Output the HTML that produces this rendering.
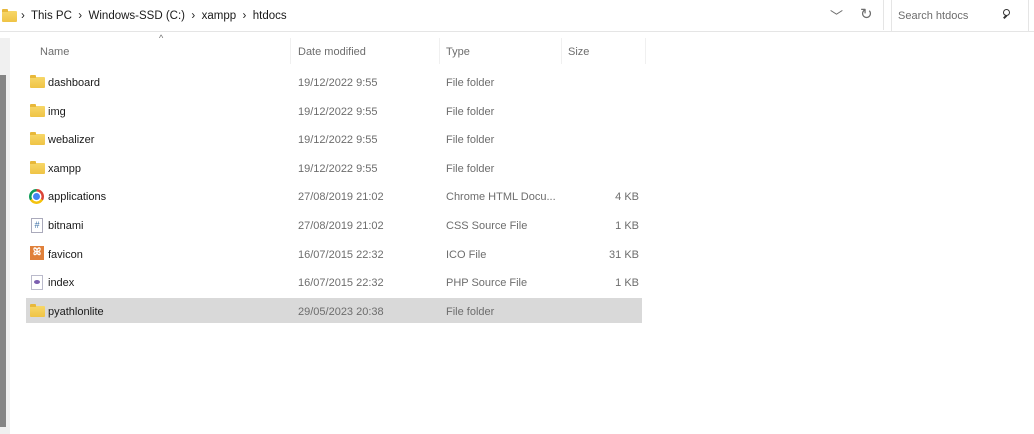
<!DOCTYPE html>
<html><head><style>
body{margin:0;width:1034px;height:434px;background:#fff;font-family:"Liberation Sans",sans-serif;font-size:11px;color:#1a1a1a;position:relative;overflow:hidden}
.a{position:absolute;white-space:nowrap}
.sep{position:absolute;top:38px;height:26px;width:1px;background:#f0f0f0}
.g{color:#6d6d6d}
.r{text-align:right;width:60px}
.fold{position:absolute;width:15px;height:11px;background:linear-gradient(#f7d768,#efc345);border-radius:1px}
.fold:before{content:"";position:absolute;left:0;top:-2px;width:6px;height:3px;background:#e8b83a;border-radius:1px 1px 0 0}
</style></head><body>
<div class="a" style="left:0;top:0;width:1034px;height:31px;border-bottom:1px solid #e5e5e5"></div>
<div class="fold" style="left:2px;top:11px"></div>
<div class="a" style="left:21px;top:10px;font-size:11.5px">›&nbsp; This PC &nbsp;›&nbsp; Windows-SSD (C:) &nbsp;›&nbsp; xampp &nbsp;›&nbsp; htdocs</div>
<div class="a" style="left:0;top:-1px;width:883px;height:31px;border-right:1px solid #e5e5e5"></div>
<div class="a g" style="left:830px;top:6px;font-size:13px">﹀</div>
<div class="a g" style="left:860px;top:5px;font-size:15px">↻</div>
<div class="a" style="left:891px;top:-1px;width:136px;height:31px;border:1px solid #e5e5e5"></div>
<div class="a g" style="left:898px;top:10px">Search htdocs</div>
<div class="a" style="left:1003px;top:9px;width:5px;height:5px;border:1.5px solid #333;border-radius:50%"></div>
<div class="a" style="left:1003px;top:16px;width:4px;height:1.5px;background:#333;transform:rotate(-45deg)"></div>
<div class="a" style="left:0;top:38px;width:10px;height:396px;background:#f0f0f0"></div>
<div class="a" style="left:0;top:75px;width:6px;height:352px;background:#858585"></div>
<div class="a g" style="left:159px;top:33px;font-size:9px">^</div>
<div class="a g" style="left:40px;top:46px">Name</div>
<div class="a g" style="left:298px;top:46px">Date modified</div>
<div class="a g" style="left:446px;top:46px">Type</div>
<div class="a g" style="left:568px;top:46px">Size</div>
<div class="sep" style="left:290px"></div><div class="sep" style="left:439px"></div><div class="sep" style="left:561px"></div><div class="sep" style="left:645px"></div>
<div class="a" style="left:26px;top:298px;width:616px;height:25px;background:#d9d9d9"></div>

<div class="fold" style="left:30px;top:77px"></div><div class="a" style="left:48px;top:77px">dashboard</div><div class="a g" style="left:298px;top:77px">19/12/2022 9:55</div><div class="a g" style="left:446px;top:77px">File folder</div>
<div class="fold" style="left:30px;top:106px"></div><div class="a" style="left:48px;top:106px">img</div><div class="a g" style="left:298px;top:106px">19/12/2022 9:55</div><div class="a g" style="left:446px;top:106px">File folder</div>
<div class="fold" style="left:30px;top:134px"></div><div class="a" style="left:48px;top:134px">webalizer</div><div class="a g" style="left:298px;top:134px">19/12/2022 9:55</div><div class="a g" style="left:446px;top:134px">File folder</div>
<div class="fold" style="left:30px;top:163px"></div><div class="a" style="left:48px;top:163px">xampp</div><div class="a g" style="left:298px;top:163px">19/12/2022 9:55</div><div class="a g" style="left:446px;top:163px">File folder</div>

<div class="a" style="left:29px;top:189px;width:15px;height:15px;border-radius:50%;background:conic-gradient(#db4437 0 120deg,#f4c20d 120deg 240deg,#0f9d58 240deg)"></div><div class="a" style="left:33px;top:193px;width:7px;height:7px;border-radius:50%;background:#4285f4;box-shadow:0 0 0 1.5px #fff"></div>
<div class="a" style="left:48px;top:191px">applications</div><div class="a g" style="left:298px;top:191px">27/08/2019 21:02</div><div class="a g" style="left:446px;top:191px">Chrome HTML Docu...</div><div class="a g r" style="left:579px;top:191px">4 KB</div>

<div class="a" style="left:31px;top:218px;width:10px;height:13px;border:1px solid #aab;font-size:9px;line-height:13px;text-align:center;color:#3a6ea5">#</div>
<div class="a" style="left:48px;top:220px">bitnami</div><div class="a g" style="left:298px;top:220px">27/08/2019 21:02</div><div class="a g" style="left:446px;top:220px">CSS Source File</div><div class="a g r" style="left:579px;top:220px">1 KB</div>

<div class="a" style="left:30px;top:246px;width:14px;height:14px;background:#e0803a;color:#fff;font-size:10px;line-height:14px;text-align:center;font-weight:bold">ꕤ</div>
<div class="a" style="left:48px;top:249px">favicon</div><div class="a g" style="left:298px;top:249px">16/07/2015 22:32</div><div class="a g" style="left:446px;top:249px">ICO File</div><div class="a g r" style="left:579px;top:249px">31 KB</div>

<div class="a" style="left:31px;top:275px;width:10px;height:13px;border:1px solid #bbc;"></div><div class="a" style="left:34px;top:280px;width:6px;height:4px;border-radius:50%;background:#7b5fb0"></div>
<div class="a" style="left:48px;top:277px">index</div><div class="a g" style="left:298px;top:277px">16/07/2015 22:32</div><div class="a g" style="left:446px;top:277px">PHP Source File</div><div class="a g r" style="left:579px;top:277px">1 KB</div>

<div class="fold" style="left:30px;top:306px"></div><div class="a" style="left:48px;top:306px">pyathlonlite</div><div class="a g" style="left:298px;top:306px">29/05/2023 20:38</div><div class="a g" style="left:446px;top:306px">File folder</div>
</body></html>
